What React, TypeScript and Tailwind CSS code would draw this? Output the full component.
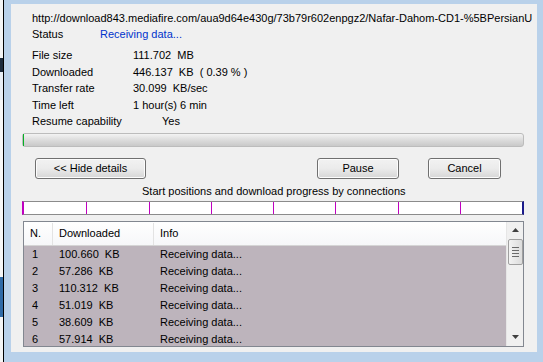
import React from "react";

const details = [
  { label: "File size", value: "111.702  MB" },
  { label: "Downloaded", value: "446.137  KB  ( 0.39 % )" },
  { label: "Transfer rate", value: "30.099  KB/sec" },
  { label: "Time left", value: "1 hour(s) 6 min" },
];

const connections = [
  { n: 1, size: "100.660  KB" },
  { n: 2, size: "57.286  KB" },
  { n: 3, size: "110.312  KB" },
  { n: 4, size: "51.019  KB" },
  { n: 5, size: "38.609  KB" },
  { n: 6, size: "57.914  KB" },
];

const WinButton = ({ label, className }: { label: string; className: string }) => (
  <div
    className={
      "h-[21px] rounded-[3px] border border-[#707070] bg-gradient-to-b from-[#f2f2f2] via-[#ebebeb] to-[#d6d6d6] flex items-center justify-center text-[11px] text-black shadow-[inset_0_0_0_1px_#fcfcfc] " +
      className
    }
  >
    {label}
  </div>
);

export default function App() {
  return (
    <div
      className="w-[543px] h-[362px] flex overflow-hidden bg-white text-[11px] text-black"
      style={{ fontFamily: '"Liberation Sans", Arial, sans-serif' }}
    >
      {/* window behind, edge */}
      <div className="w-[3px] flex flex-col">
        <div className="h-[58px] bg-[#f4f4f4]" />
        <div className="h-[14px] bg-[#1c2b3c]" />
        <div className="h-[28px] bg-[#e8eef5]" />
        <div className="h-[177px] bg-[#f6f6f6]" />
        <div className="h-[40px] bg-[#2f6aa6]" />
        <div className="flex-1 bg-[#f4f4f4]" />
      </div>
      <div className="w-[1px] bg-black" />

      {/* window frame */}
      <div className="flex-1 bg-[#b9d1ea] pl-[7px] pt-[4px] pr-[6px] pb-[10px] flex">
        <div className="flex-1 bg-[#f0f0f0] flex flex-col">
          {/* details */}
          <div className="pl-[21px] pt-[6px]">
            <div className="leading-[16px] whitespace-nowrap">
              http://download843.mediafire.com/aua9d64e430g/73b79r602enpgz2/Nafar-Dahom-CD1-%5BPersianU
            </div>
            <div className="leading-[16px] flex">
              <span className="w-[68px]">Status</span>
              <span className="text-[#0033cc]">Receiving data...</span>
            </div>
            <div className="mt-[5px]">
              {details.map((d) => (
                <div key={d.label} className="h-[16.5px] leading-[16.5px] flex">
                  <span className="w-[101px]">{d.label}</span>
                  <span className="whitespace-pre">{d.value}</span>
                </div>
              ))}
              <div className="h-[16.5px] leading-[16.5px] flex">
                <span className="w-[130px]">Resume capability</span>
                <span>Yes</span>
              </div>
            </div>
          </div>

          {/* overall progress */}
          <div className="ml-[11px] mt-[3px] w-[502px] h-[14px] rounded-[3px] border border-[#bcbcbc] bg-gradient-to-b from-[#f3f3f3] via-[#dcdcdc] to-[#c9c9c9] flex">
            <div className="w-[1px] bg-[#06b025]" />
          </div>

          {/* buttons */}
          <div className="mt-[11px] flex">
            <WinButton label="<< Hide details" className="ml-[24px] w-[111px]" />
            <WinButton label="Pause" className="ml-[171px] w-[82px]" />
            <WinButton label="Cancel" className="ml-[29px] w-[73px]" />
          </div>

          <div className="mt-[4px] leading-[16px] pl-[131px]">
            Start positions and download progress by connections
          </div>

          {/* connections bar */}
          <div className="ml-[11px] mt-[2px] w-[502px] h-[14px] border border-[#8b8b8b] border-l-2 border-l-[#c000c0] border-r-2 border-r-[#1a1a8a] bg-white grid grid-cols-8">
            {Array.from({ length: 8 }).map((_, i) => (
              <div key={i} className={i === 0 ? "" : "border-l border-[#c000c0]"} />
            ))}
          </div>

          {/* list */}
          <div className="ml-[12px] mt-[6px] w-[501px] h-[126px] border border-[#828790] flex">
            <div className="flex-1 flex flex-col bg-[#bdb4bc] overflow-hidden">
              <div className="h-[24px] shrink-0 flex bg-gradient-to-b from-white to-[#f6f7f9] border-b border-[#d5d5d5] pt-[1px]">
                <div className="w-[29px] pl-[6px] flex items-center border-r border-[#e3e3e3]">N.</div>
                <div className="w-[101px] pl-[6px] flex items-center border-r border-[#e3e3e3]">Downloaded</div>
                <div className="flex-1 pl-[6px] flex items-center">Info</div>
              </div>
              <div>
                {connections.map((c) => (
                  <div key={c.n} className="h-[17.2px] leading-[17.2px] flex">
                    <span className="w-[29px] pl-[8px]">{c.n}</span>
                    <span className="w-[101px] pl-[6px] whitespace-pre">{c.size}</span>
                    <span className="pl-[6px]">Receiving data...</span>
                  </div>
                ))}
              </div>
            </div>
            {/* scrollbar */}
            <div className="w-[17px] bg-[#f0f0f0] border-l border-[#e6e6e6] flex flex-col items-center">
              <div className="h-[17px] w-full flex items-center justify-center">
                <svg width="7" height="4" viewBox="0 0 7 4">
                  <path d="M0 4 L3.5 0 L7 4 Z" fill="#404040" />
                </svg>
              </div>
              <div className="w-[15px] h-[26px] rounded-[2px] border border-[#a0a0a0] bg-gradient-to-r from-[#f3f3f3] to-[#dcdcdc] flex flex-col items-center justify-center gap-[2px]">
                <div className="w-[7px] h-[1px] bg-[#6a6a6a]" />
                <div className="w-[7px] h-[1px] bg-[#6a6a6a]" />
                <div className="w-[7px] h-[1px] bg-[#6a6a6a]" />
                <div className="w-[7px] h-[1px] bg-[#6a6a6a]" />
              </div>
              <div className="flex-1" />
              <div className="h-[17px] w-full flex items-center justify-center">
                <svg width="7" height="4" viewBox="0 0 7 4">
                  <path d="M0 0 L7 0 L3.5 4 Z" fill="#404040" />
                </svg>
              </div>
            </div>
          </div>
        </div>
      </div>
    </div>
  );
}
